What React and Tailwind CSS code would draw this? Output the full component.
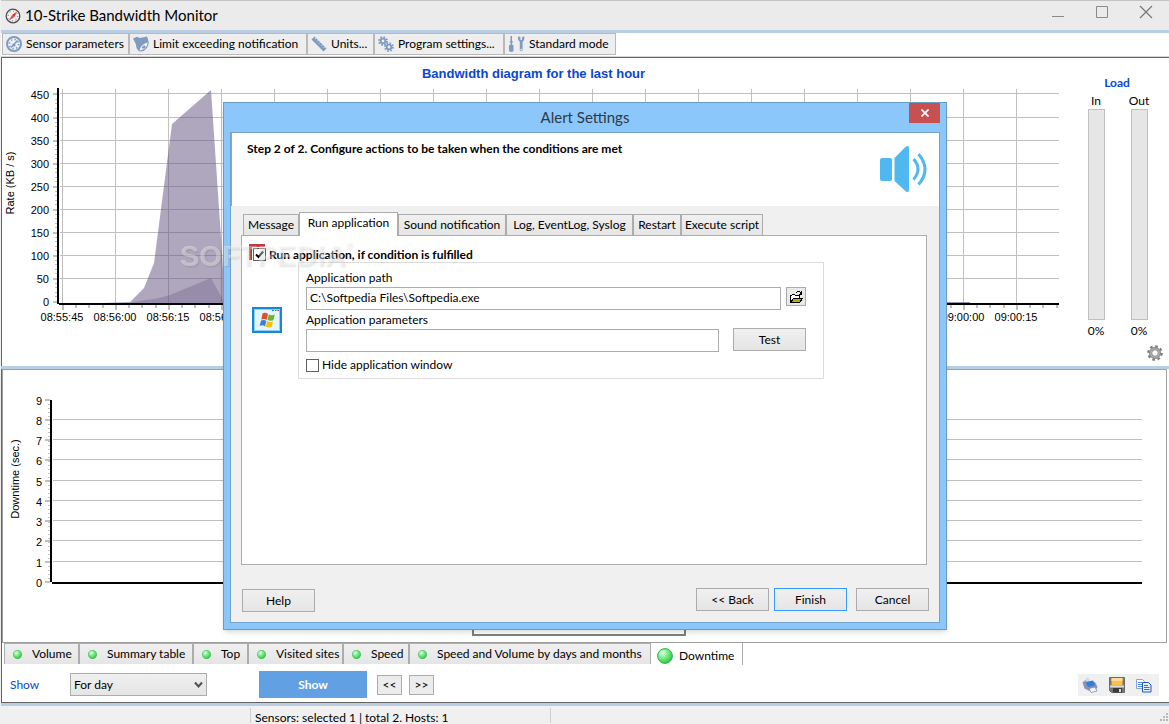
import { Fragment } from 'react';

const timeTicks = Array.from({ length: 19 }, (_, i) => i);
const rateLabels = [450, 400, 350, 300, 250, 200, 150, 100, 50, 0];
const downLabels = [9, 8, 7, 6, 5, 4, 3, 2, 1, 0];

const bottomTabs = [
  { label: 'Volume', width: 'w-[75px]' },
  { label: 'Summary table', width: 'w-[114px]' },
  { label: 'Top', width: 'w-[55px]' },
  { label: 'Visited sites', width: 'w-[95px]' },
  { label: 'Speed', width: 'w-[66px]' },
  { label: 'Speed and Volume by days and months', width: 'w-[242px]' },
];

function timeLabel(i) {
  const total = 55 * 60 + 45 + i * 15;
  const m = Math.floor(total / 60);
  const hour = m >= 60 ? '09' : '08';
  return `${hour}:${String(m % 60).padStart(2, '0')}:${String(total % 60).padStart(2, '0')}`;
}

function CompassIcon() {
  return (
    <svg width="16" height="16" viewBox="0 0 16 16">
      <circle cx="8" cy="8" r="6.8" fill="#f4f4f4" stroke="#4d4d4d" strokeWidth="1.3" />
      <circle cx="8" cy="8" r="4.8" fill="none" stroke="#555" strokeWidth="1" strokeDasharray="1 2.7" />
      <path d="M12 3.6 9.2 9.2 7 7Z" fill="#e3262b" />
      <path d="M4 12.4 7 7l2.2 2.2Z" fill="#e8484c" />
    </svg>
  );
}

function GaugeIcon() {
  return (
    <svg width="16" height="16" viewBox="0 0 16 16" className="shrink-0">
      <circle cx="8" cy="8" r="7" fill="#eef1f6" stroke="#7f9cc0" strokeWidth="2" />
      <circle cx="8" cy="8" r="4.6" fill="none" stroke="#7f9cc0" strokeWidth="1.6" strokeDasharray="1.4 2.2" />
      <path d="M5 11.5 11.5 4.5" stroke="#7f9cc0" strokeWidth="1.5" />
      <circle cx="8" cy="9" r="1.6" fill="#7f9cc0" />
    </svg>
  );
}

function BellIcon() {
  return (
    <svg width="16" height="16" viewBox="0 0 16 16" className="shrink-0">
      <path d="M0 2.500 4 .8 7 2 14 .5Q16 5 14.500 6.500L9 10.500 6.500 15C3.500 13.500 3 11 3 8.500Z" fill="#7f9cc0" />
      <path d="M15 5.500c.8 4-2.500 9-7.500 9.500l-1.500-.5c0-3 3-7 9-9Z" fill="#f4f6fa" stroke="#7f9cc0" strokeWidth="1.2" />
      <path d="M9 11c1-1.500 3-2 3.500-1s-.5 2.500-2 2.500S8.500 12 9 11Z" fill="#7f9cc0" />
    </svg>
  );
}

function RulerIcon() {
  return (
    <svg width="16" height="16" viewBox="0 0 16 16" className="shrink-0">
      <path d="M.5 3.500 3.500.5 15.500 12.500l-3 3Z" fill="#7f9cc0" />
      <path d="M5 2 3.800 3.200M7.200 4.200 6 5.400M9.400 6.400 8.200 7.600M11.600 8.600l-1.200 1.200M13.800 10.800l-1.200 1.200" stroke="#eee" strokeWidth=".9" />
    </svg>
  );
}

function GearsIcon() {
  return (
    <svg width="16" height="16" viewBox="0 0 16 16" fill="none" stroke="#7f9cc0" className="shrink-0">
      <circle cx="5" cy="5" r="2.300" strokeWidth="1.800" />
      <circle cx="5" cy="5" r="4" strokeWidth="1.800" strokeDasharray="1.600 1.540" />
      <circle cx="11" cy="11" r="2.300" strokeWidth="1.800" />
      <circle cx="11" cy="11" r="4" strokeWidth="1.800" strokeDasharray="1.600 1.540" />
    </svg>
  );
}

function ToolsIcon() {
  return (
    <svg width="17" height="16" viewBox="0 0 17 16" className="shrink-0">
      <path d="M2.500 0h1.500v5h1L4.200 7v2h1.300v6q-2.200 1.800-4.500 0V9h1.500V7L1.500 5h1Z" fill="#7f9cc0" />
      <path d="M10.500 0 12.500 1.500v2.500h1.500V1.500L16 0q1.200 4-1.400 5.700V14q-1.400 2.600-2.800 0V5.700Q9 4 10.500 0Z" fill="#7f9cc0" />
      <circle cx="13.200" cy="13.600" r=".9" fill="#eee" />
    </svg>
  );
}

function Led({ size }) {
  return (
    <svg width={size} height={size} viewBox="0 0 16 16" className="shrink-0">
      <defs>
        <radialGradient id={`led${size}`} cx=".35" cy=".3" r=".8">
          <stop offset="0" stopColor="#e6ffe9" />
          <stop offset=".4" stopColor="#7df08a" />
          <stop offset="1" stopColor="#1fbf35" />
        </radialGradient>
      </defs>
      <circle cx="8" cy="8" r="7.400" fill={`url(#led${size})`} stroke="#35b04a" strokeWidth="1" />
    </svg>
  );
}

function SpeakerIcon() {
  return (
    <svg width="48" height="48" viewBox="0 0 48 48">
      <rect x="1" y="13" width="12" height="23" rx="2" fill="#50b8f0" />
      <path d="M15.500 13 27 1.500Q30 0 30 3v42q0 3-3 1.500L15.500 36Z" fill="#50b8f0" />
      <path d="M34.500 14q9 10 0 20.500M39.500 9q13 15.500 0 30.500" fill="none" stroke="#50b8f0" strokeWidth="3" />
    </svg>
  );
}

function AppIcon() {
  return (
    <svg width="30" height="26" viewBox="0 0 30 26">
      <rect x="1" y="1" width="28" height="24" fill="#e4f5fe" stroke="#1688d8" strokeWidth="2" />
      <rect x="2.500" y="2.500" width="25" height="21" fill="none" stroke="#8fd0f8" />
      <path d="M20 3.500h2M23 3.500h1.500" stroke="#1688d8" />
      <path d="M25.500 3.500h1.500" stroke="#d03020" />
      <path d="M10.500 6.500q3-1.500 5.500.5l-1.300 5.800q-2.700-1.500-5.400-.2Z" fill="#e2502a" />
      <path d="M16.800 7.500q3 1.500 6 0l-1.400 5.800q-3 1-5.900-.3Z" fill="#6db52f" />
      <path d="M9 13.500q2.800-1.300 5.400.3L13 19.500q-2.500-2-5.400-.5Z" fill="#3f7fd0" />
      <path d="M15.200 14.200q3 1.300 5.900.2l-1.400 5.500q-3 1.300-5.900-.2Z" fill="#f5c400" />
    </svg>
  );
}

function FolderIcon() {
  return (
    <svg width="14" height="14" viewBox="0 0 14 14" shapeRendering="crispEdges">
      <path d="M1.500 12.500v-7h1l1-1h2l1 1h4v2" fill="#fff" stroke="#000" />
      <path d="M1.500 12.500 4.500 8.500h9L10.500 12.500Z" fill="#b5ad00" stroke="#000" />
      <path d="M6.500 2.500h1l1-1h2l1 1v1M12.500 1v3h-3" fill="none" stroke="#000" />
    </svg>
  );
}

function GearIcon() {
  return (
    <svg width="16" height="16" viewBox="0 0 16 16" fill="none">
      <circle cx="8" cy="8" r="6.700" stroke="#7a7a7a" strokeWidth="2.200" strokeDasharray="2.600 2.660" />
      <circle cx="8" cy="8" r="4.600" stroke="#a8a8a8" strokeWidth="2.200" />
      <circle cx="8" cy="8" r="5.600" stroke="#777" strokeWidth=".7" />
      <circle cx="8" cy="8" r="3.300" fill="#fff" stroke="#777" strokeWidth=".9" />
    </svg>
  );
}

function PrinterIcon() {
  return (
    <svg width="16" height="16" viewBox="0 0 16 16">
      <path d="M.5 5.500 3.500 3l9.500 2 2.500 5-2 3.500-5 1L2.500 11.500Z" fill="#8b92b8" />
      <path d="M3.500 1.500 6 .5l3 4.500L4 6.500Z" fill="#d5daea" />
      <path d="M3.500 5 11 3.500l2 5-7 1.500Z" fill="#2e7fd6" />
      <path d="m7 11.500 6-1.500 2 4-6 1.500Z" fill="#f6f7fc" stroke="#7a80a8" strokeWidth=".7" />
    </svg>
  );
}

function DiskIcon() {
  return (
    <svg width="16" height="16" viewBox="0 0 16 16">
      <path d="M.5.500h15v15h-13l-2-2Z" fill="#777" stroke="#6a6a6a" />
      <rect x="2.500" y="1" width="11" height="7.500" fill="#fbbf4b" />
      <rect x="2.500" y="1" width="11" height="3" fill="#fddd96" />
      <rect x="1" y="8.500" width="14" height="2" fill="#dcdcdc" />
      <rect x="4" y="11" width="9" height="4.500" fill="#3a3a3a" />
      <rect x="10" y="12" width="2" height="3" fill="#ddd" />
    </svg>
  );
}

function CopyIcon() {
  return (
    <svg width="16" height="16" viewBox="0 0 16 16">
      <path d="M.5 2.500h6l2 2v7h-8Z" fill="#fff" stroke="#7fa6dd" />
      <path d="M2 5.500h4M2 7.500h4M2 9.500h4" stroke="#4f86d6" />
      <path d="M6.500 5.500h6l2.500 2.500v7H6.500Z" fill="#e6f0fd" stroke="#2257b8" />
      <path d="M8 8.500h4M8 10.500h5.500M8 12.500h5.500" stroke="#2f6fd0" />
    </svg>
  );
}

function ToolButton({ icon, children, width }) {
  return (
    <button className={`${width} flex h-[22px] shrink-0 items-center gap-1 border border-[#b9b9b9] bg-[#eeeeee] pl-[3px] whitespace-nowrap`}>
      {icon}
      {children}
    </button>
  );
}

function PushButton({ children, className = '' }) {
  return (
    <button className={`h-[23px] w-[73px] border bg-linear-to-b from-[#f0f0f0] to-[#e5e5e5] ${className || 'border-[#acacac]'}`}>
      {children}
    </button>
  );
}

function DialogTab({ children, width }) {
  return (
    <button role="tab" className={`${width} h-[21px] shrink-0 border border-b-0 border-[#acacac] bg-linear-to-b from-[#f0f0f0] to-[#e5e5e5] whitespace-nowrap`}>
      {children}
    </button>
  );
}

function BandwidthChart() {
  return (
    <svg className="h-[270px] w-full font-['Liberation_Sans'] text-[11px]" shapeRendering="crispEdges">
      {rateLabels.map((v, i) => {
        const y = i === 0 ? 5 : 6 + i * 23;
        return (
          <Fragment key={v}>
            {v > 0 && <rect x="58" y={y} width="100%" height="1" fill="#c0c0c0" />}
            <rect x="51" y={y} width="4" height="2" fill="#c0c0c0" />
            <text x="47" y={11 + i * 23} textAnchor="end" fill="#000">{v}</text>
          </Fragment>
        );
      })}
      {Array.from({ length: 46 }, (_, i) => (
        <rect key={i} x="53" y={6 + Math.round(i * 4.6)} width="2" height="1" fill="#c0c0c0" />
      ))}
      {timeTicks.map((i) => (
        <Fragment key={i}>
          <rect x={60 + i * 53} y="1" width="1" height="214" fill="#c0c0c0" />
          <rect x={60 + i * 53} y="217" width="2" height="5" fill="#c0c0c0" />
          <rect x={73 + i * 53} y="217" width="2" height="3" fill="#c0c0c0" />
          <rect x={86 + i * 53} y="217" width="2" height="3" fill="#c0c0c0" />
          <rect x={100 + i * 53} y="217" width="2" height="3" fill="#c0c0c0" />
          {(i < 4 || i > 16) && <text x={60 + i * 53} y="233" textAnchor="middle" fill="#000">{timeLabel(i)}</text>}
        </Fragment>
      ))}
      <g shapeRendering="auto" fill="#5f4f7b">
        <polygon points="100,215 128,214 142,200 152,175 170,36 209,2 219,150 223,215" fillOpacity=".5" />
        <polygon points="128,215 142,212 153,211 168,207 209,190 221,212 223,215" fillOpacity=".3" />
      </g>
      <rect x="930" y="214" width="38" height="1" fill="#5f4f7b" fillOpacity=".6" />
      <rect x="55" y="0" width="2" height="216" fill="#000" />
      <rect x="57" y="215" width="100%" height="2" fill="#000" />
      <text transform="translate(12 95) rotate(-90)" textAnchor="middle" fill="#000">Rate (KB / s)</text>
    </svg>
  );
}

function DowntimeChart() {
  return (
    <div className="mr-[24px]">
      <svg className="h-[246px] w-full font-['Liberation_Sans'] text-[11px]" shapeRendering="crispEdges">
        {downLabels.map((v, i) => {
          const y = 29 + Math.floor(i * 20.25);
          return (
            <Fragment key={v}>
              {v > 0 && v < 9 && <rect x="50" y={y} width="100%" height="1" fill="#c0c0c0" />}
              <rect x="42" y={y} width="5" height="2" fill="#c0c0c0" />
              <text x="39" y={y + 6} textAnchor="end" fill="#000">{v}</text>
            </Fragment>
          );
        })}
        {Array.from({ length: 45 }, (_, i) => (
          <rect key={i} x="45" y={30 + Math.round(i * 4.05)} width="2" height="1" fill="#c0c0c0" />
        ))}
        <rect x="47" y="30" width="2" height="182" fill="#000" />
        <rect x="49" y="212" width="100%" height="2" fill="#000" />
        <text transform="translate(16 109) rotate(-90)" textAnchor="middle" fill="#000">Downtime (sec.)</text>
      </svg>
    </div>
  );
}

function LoadBar({ label }) {
  return (
    <div className="flex w-[30px] flex-col items-center">
      <span className="h-4 leading-4">{label}</span>
      <div className="h-[211px] w-[17px] border border-[#c0c0c0] bg-[#e6e6e6]" />
      <span className="mt-[3px] leading-4">0%</span>
    </div>
  );
}

function AlertDialog() {
  return (
    <div role="dialog" aria-label="Alert Settings" className="flex h-[528px] w-[724px] flex-col border border-[#6b9bc5] bg-[#8cc7fb] px-1.5 pb-1.5 shadow-md">
      <div className="relative flex h-[29px] shrink-0 items-center justify-center text-[15px] text-[#2b3a48]">
        Alert Settings
        <button aria-label="Close" className="absolute top-0 right-0 flex h-5 w-[31px] items-center justify-center bg-[#c75050]">
          <svg width="8" height="8" viewBox="0 0 8 8" stroke="#fff" strokeWidth="1.700"><path d="m.5.500 7 7M7.500.500l-7 7" /></svg>
        </button>
      </div>
      <div className="flex flex-1 flex-col border border-[#73a3cb] bg-[#f0f0f0]">
        <div className="flex h-[73px] shrink-0 justify-between border-l border-[#a0a0a0] bg-white pr-3 pl-[15px]">
          <h1 className="mt-2 leading-4 font-bold">Step 2 of 2. Configure actions to be taken when the conditions are met</h1>
          <div className="mt-3"><SpeakerIcon /></div>
        </div>

        <div role="tablist" className="mx-2.5 mt-1.5 flex items-end pl-0.5">
          <DialogTab width="w-14">Message</DialogTab>
          <button role="tab" aria-selected="true" className="relative -mb-px h-6 w-[99px] border border-b-0 border-[#acacac] bg-white pb-1 whitespace-nowrap">Run application</button>
          <DialogTab width="w-[108px]">Sound notification</DialogTab>
          <DialogTab width="w-[127px]">Log, EventLog, Syslog</DialogTab>
          <DialogTab width="w-12">Restart</DialogTab>
          <DialogTab width="w-[82px]">Execute script</DialogTab>
        </div>

        <div className="mr-3 ml-2.5 h-[330px] border border-[#acacac] bg-white pt-2 pl-[7px]">
          <label className="flex h-[18px] w-max items-start gap-[3px] pt-1 pl-1 font-bold">
            <input type="checkbox" defaultChecked className="peer sr-only" />
            <span className="relative flex size-[13px] shrink-0 items-center justify-center border border-[#606060] bg-white">
              <span className="absolute -top-[5px] -left-[5px] size-4 border-t-3 border-l-3 border-[#c03a40]" />
              <svg width="9" height="9" viewBox="0 0 9 9" fill="none" stroke="#000" strokeWidth="2"><path d="M1 4.500 3.500 7 8 1.500" /></svg>
            </span>
            <span className="leading-[14px]">Run application, if condition is fulfilled</span>
          </label>
          <div className="flex">
            <div className="w-[49px] shrink-0 pt-[45px] pl-[3px]"><AppIcon /></div>
            <div className="h-[117px] w-[526px] border border-[#dcdcdc] pt-[7px] pl-[7px]">
              <label htmlFor="path" className="block leading-4">Application path</label>
              <div className="mt-px flex gap-[5px]">
                <input id="path" defaultValue="C:\Softpedia Files\Softpedia.exe" className="h-[23px] w-[475px] border border-[#acacac] px-[3px] pb-0.5" />
                <button aria-label="Browse" className="flex h-[19px] w-5 items-center justify-center border border-[#acacac] bg-[#e9e9e9]"><FolderIcon /></button>
              </div>
              <label htmlFor="params" className="mt-0.5 block leading-4">Application parameters</label>
              <div className="flex gap-3.5">
                <input id="params" className="mt-px h-[23px] w-[413px] border border-[#acacac] px-[3px]" />
                <PushButton>Test</PushButton>
              </div>
              <label className="mt-[5px] flex items-center gap-[3px] leading-4">
                <input type="checkbox" className="size-[13px] appearance-none border border-[#606060] bg-white" />
                Hide application window
              </label>
            </div>
          </div>
        </div>

        <div className="mt-[23px] mr-2.5 ml-[11px] flex">
          <div className="mt-px"><PushButton>Help</PushButton></div>
          <div className="ml-auto flex">
            <PushButton>&lt;&lt; Back</PushButton>
            <div className="mr-[9px] ml-[5px]"><PushButton className="border-[#3399ff]">Finish</PushButton></div>
            <PushButton>Cancel</PushButton>
          </div>
        </div>
      </div>
    </div>
  );
}

export default function App() {
  return (
    <div className="relative flex min-h-screen flex-col overflow-hidden bg-[#f0f0f0] pl-px font-['Lato','Open_Sans',sans-serif] text-[12px] text-black">
      <header className="flex h-[30px] items-center gap-1 border-t border-[#c4c4c4] bg-[#ebebeb] pl-1">
        <CompassIcon />
        <span className="text-[15px]">10-Strike Bandwidth Monitor</span>
        <div className="mr-4 mb-2 ml-auto flex gap-[30px]">
          <button aria-label="Minimize"><svg width="14" height="14" stroke="#8a8a8a"><path d="M1 11.500h12" /></svg></button>
          <button aria-label="Maximize"><svg width="14" height="14" fill="none" stroke="#8a8a8a"><path d="M1.500 1.500h11v11h-11Z" /></svg></button>
          <button aria-label="Close"><svg width="14" height="14" stroke="#777" strokeWidth="1.200"><path d="m1 1 12 12M13 1 1 13" /></svg></button>
        </div>
      </header>
      <div className="h-[3px] bg-[#b9cde5]" />
      <nav className="flex h-6 border-b border-[#d4d4d4] bg-white pl-px">
        <ToolButton width="w-[127px]" icon={<GaugeIcon />}>Sensor parameters</ToolButton>
        <ToolButton width="w-[178px]" icon={<BellIcon />}>Limit exceeding notification</ToolButton>
        <ToolButton width="w-[67px]" icon={<RulerIcon />}>Units...</ToolButton>
        <ToolButton width="w-[130px]" icon={<GearsIcon />}>Program settings...</ToolButton>
        <ToolButton width="w-[112px]" icon={<ToolsIcon />}>Standard mode</ToolButton>
      </nav>

      <section className="flex h-[309px] border-t border-l border-[#646464] bg-white">
        <div className="min-w-0 flex-1">
          <h2 className="h-[30px] pt-2 pl-1.5 text-center font-['Liberation_Sans'] text-[13px] leading-4 font-bold text-[#0a46d4]">Bandwidth diagram for the last hour</h2>
          <BandwidthChart />
        </div>
        <aside className="ml-[22px] flex w-[88px] shrink-0 flex-col pt-[17px]">
          <div className="w-[72px] text-center leading-4 font-bold text-[#0a46d4]">Load</div>
          <div className="mt-0.5 flex gap-[13px]">
            <LoadBar label="In" />
            <LoadBar label="Out" />
          </div>
          <button aria-label="Chart settings" className="mt-1.5 mr-1.5 self-end"><GearIcon /></button>
        </aside>
      </section>
      <div className="h-[3px] bg-[#b9cde5]" />

      <main className="border-l border-[#646464] bg-white">
        <section className="mr-0.5 flex h-[274px] flex-col border border-[#a0a0a0]">
          <DowntimeChart />
          <div className="mr-[11px] h-5 w-[214px] self-center border-2 border-[#808080] bg-white" />
        </section>
        <div role="tablist" className="flex h-[22px] pl-0.5">
          {bottomTabs.map((tab) => (
            <button key={tab.label} role="tab" className={`${tab.width} flex h-[21px] shrink-0 items-center border border-b-0 border-[#acacac] bg-linear-to-b from-[#f0f0f0] to-[#e5e5e5] pl-2 whitespace-nowrap`}>
              <Led size={9} />
              <span className="ml-2.5">{tab.label}</span>
            </button>
          ))}
          <button role="tab" aria-selected="true" className="flex h-[22px] w-[92px] items-center gap-1.5 border-r border-[#acacac] bg-white pt-1 pl-1.5">
            <Led size={16} />
            Downtime
          </button>
        </div>
        <form className="flex h-[38px] items-center border-b border-[#646464] pt-0.5 pl-2" onSubmit={(e) => e.preventDefault()}>
          <label htmlFor="period" className="w-[60px] text-[#0a46d4]">Show</label>
          <div className="relative">
            <select id="period" className="h-[23px] w-[137px] appearance-none border border-[#acacac] bg-linear-to-b from-[#f0f0f0] to-[#e5e5e5] px-[3px]">
              <option>For day</option>
            </select>
            <svg className="pointer-events-none absolute top-2 right-1" width="9" height="8" viewBox="0 0 9 8" fill="none" stroke="#505050" strokeWidth="2"><path d="m1 1.500 3.500 4L8 1.500" /></svg>
          </div>
          <button className="ml-[52px] h-[27px] w-[108px] bg-[#62a0e4] font-bold text-white">Show</button>
          <button className="ml-2.5 h-5 w-[25px] border border-[#acacac] bg-[#ececec] leading-4">&lt;&lt;</button>
          <button className="ml-[7px] h-5 w-[25px] border border-[#acacac] bg-[#ececec] leading-4">&gt;&gt;</button>
          <div className="mr-2.5 ml-auto flex h-[22px] w-[81px] items-center justify-between bg-[#f0f0f0] pr-[7px] pl-1">
            <button aria-label="Print"><PrinterIcon /></button>
            <button aria-label="Save"><DiskIcon /></button>
            <button aria-label="Copy"><CopyIcon /></button>
          </div>
        </form>
      </main>
      <div className="h-[3px] bg-[#b9cde5]" />
      <footer className="flex h-[17px] items-end">
        <div className="h-[15px] w-[250px] border-r border-[#d0d0d0]" />
        <div className="h-[15px] w-[300px] border-r border-[#d0d0d0] pt-0.5 pl-1 leading-4">Sensors: selected 1 | total 2. Hosts: 1</div>
        <svg className="ml-auto" width="10" height="10" fill="#b8b8b8"><path d="M7 0h2v2H7zM7 3h2v2H7zM4 3h2v2H4zM7 6h2v2H7zM4 6h2v2H4zM1 6h2v2H1z" /></svg>
      </footer>

      <div className="absolute inset-0 flex items-start justify-center pt-[102px] pl-px">
        <AlertDialog />
      </div>
      <div className="pointer-events-none absolute top-[238px] left-[180px] flex items-start font-['Liberation_Sans'] text-[29px] leading-9 font-bold text-white/40 [text-shadow:1px_1px_2px_rgb(0_0_0_/_0.12)]">
        SOFTPEDIA<span className="text-[9px] leading-4">®</span>
      </div>
    </div>
  );
}
